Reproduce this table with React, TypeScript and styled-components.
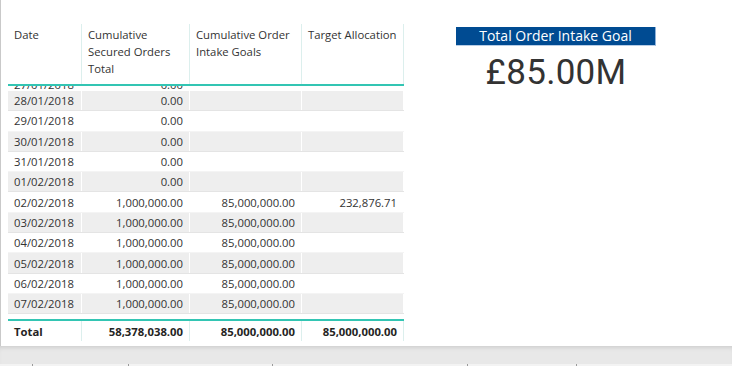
import React from "react";
import styled, { createGlobalStyle } from "styled-components";

const Global = createGlobalStyle`
  html, body { margin: 0; padding: 0; background: #ffffff; }
  body { font-family: "Segoe UI", "Open Sans", sans-serif; }
  * { box-sizing: border-box; }
`;

const TEAL = "#33c5b3";
const DIVIDER = "#dcefed";

const Page = styled.div`
  width: 732px;
  height: 366px;
  display: flex;
  flex-direction: column;
  overflow: hidden;
`;

const Canvas = styled.div`
  height: 346px;
  flex: none;
  display: flex;
  align-items: flex-start;
  background: #ffffff;
  border-left: 1px solid #c9c9c9;
`;

const Matrix = styled.div`
  margin-left: 7px;
  margin-top: 24px;
  width: 396px;
  display: flex;
  flex-direction: column;
  font-size: 11.3px;
  color: #333333;
`;

const GridRow = styled.div`
  display: grid;
  grid-template-columns: 74px 108px 112px 102px;
`;

const HeaderRow = styled(GridRow)`
  height: 62px;
  border-bottom: 2px solid ${TEAL};
`;

const HeaderCell = styled.div`
  padding: 2px 6px 0 6px;
  line-height: 17px;
  border-right: 1px solid ${DIVIDER};
`;

const ScrollBody = styled.div`
  height: 231px;
  overflow: hidden;
  display: flex;
  flex-direction: column;
`;

const BodyRow = styled(GridRow)<{ $shaded: boolean }>`
  height: 20.3px;
  flex: none;
  background: ${(p) => (p.$shaded ? "#eeeeee" : "#ffffff")};
  border-bottom: 1px solid ${(p) => (p.$shaded ? "#e4e4e4" : "#f4f4f4")};
`;

const PeekRow = styled(GridRow)`
  height: 5px;
  flex: none;
  overflow: hidden;
  background: #ffffff;
  grid-template-rows: 5px;
`;

const Cell = styled.div<{ $align?: "left" | "right" }>`
  display: flex;
  align-items: center;
  justify-content: ${(p) => (p.$align === "right" ? "flex-end" : "flex-start")};
  padding: 0 6px;
  white-space: nowrap;
  border-right: 1px solid #ffffff;
`;

const PeekCell = styled(Cell)`
  align-items: flex-end;
  line-height: 8px;
  height: 5px;
  padding-bottom: 2px;
  overflow: hidden;
`;

const TotalRow = styled(GridRow)`
  margin-top: 2px;
  height: 22px;
  border-top: 2px solid ${TEAL};
  font-weight: 700;
  color: #252423;
`;

const TotalCell = styled(Cell)`
  border-right: 1px solid ${DIVIDER};
  padding-top: 1px;
`;

const Card = styled.div`
  margin-left: 52px;
  margin-top: 27px;
  width: 200px;
  display: flex;
  flex-direction: column;
  align-items: center;
`;

const Banner = styled.div`
  width: 200px;
  height: 19px;
  background: #004b92;
  border-right: 1px solid #8eb1d9;
  border-bottom: 1px solid #b8cde6;
  color: #ffffff;
  font-size: 14px;
  line-height: 18px;
  text-align: center;
`;

const Value = styled.div`
  margin-top: 7px;
  font-family: Roboto, "DejaVu Sans", sans-serif;
  font-size: 35px;
  line-height: 40px;
  color: #333333;
  letter-spacing: 0.3px;
`;

const GrayBand = styled.div`
  height: 18px;
  flex: none;
  background: #e8e8e8;
  box-shadow: inset 0 4px 5px -3px rgba(0, 0, 0, 0.14);
`;

const TabStrip = styled.div`
  height: 2px;
  flex: none;
  display: flex;
  background: #f3f3f3;
`;

const TabTick = styled.div<{ $w: number }>`
  width: ${(p) => p.$w}px;
  flex: none;
  border-right: 1px solid #9a9a9a;
`;

type Row = { date: string; sec: string; goal: string; alloc: string };

const rows: Row[] = [
  { date: "28/01/2018", sec: "0.00", goal: "", alloc: "" },
  { date: "29/01/2018", sec: "0.00", goal: "", alloc: "" },
  { date: "30/01/2018", sec: "0.00", goal: "", alloc: "" },
  { date: "31/01/2018", sec: "0.00", goal: "", alloc: "" },
  { date: "01/02/2018", sec: "0.00", goal: "", alloc: "" },
  { date: "02/02/2018", sec: "1,000,000.00", goal: "85,000,000.00", alloc: "232,876.71" },
  { date: "03/02/2018", sec: "1,000,000.00", goal: "85,000,000.00", alloc: "" },
  { date: "04/02/2018", sec: "1,000,000.00", goal: "85,000,000.00", alloc: "" },
  { date: "05/02/2018", sec: "1,000,000.00", goal: "85,000,000.00", alloc: "" },
  { date: "06/02/2018", sec: "1,000,000.00", goal: "85,000,000.00", alloc: "" },
  { date: "07/02/2018", sec: "1,000,000.00", goal: "85,000,000.00", alloc: "" },
];

export default function App() {
  return (
    <>
      <Global />
      <Page>
        <Canvas>
          <Matrix>
            <HeaderRow>
              <HeaderCell>Date</HeaderCell>
              <HeaderCell>Cumulative Secured Orders Total</HeaderCell>
              <HeaderCell>Cumulative Order Intake Goals</HeaderCell>
              <HeaderCell>Target Allocation</HeaderCell>
            </HeaderRow>
            <ScrollBody>
              <PeekRow>
                <PeekCell>27/01/2018</PeekCell>
                <PeekCell $align="right">0.00</PeekCell>
                <PeekCell />
                <PeekCell />
              </PeekRow>
              {rows.map((r, i) => (
                <BodyRow key={r.date} $shaded={i % 2 === 0}>
                  <Cell>{r.date}</Cell>
                  <Cell $align="right">{r.sec}</Cell>
                  <Cell $align="right">{r.goal}</Cell>
                  <Cell $align="right">{r.alloc}</Cell>
                </BodyRow>
              ))}
            </ScrollBody>
            <TotalRow>
              <TotalCell>Total</TotalCell>
              <TotalCell $align="right">58,378,038.00</TotalCell>
              <TotalCell $align="right">85,000,000.00</TotalCell>
              <TotalCell $align="right">85,000,000.00</TotalCell>
            </TotalRow>
          </Matrix>
          <Card>
            <Banner>Total Order Intake Goal</Banner>
            <Value>£85.00M</Value>
          </Card>
        </Canvas>
        <GrayBand />
        <TabStrip>
          <TabTick $w={33} />
          <TabTick $w={96} />
          <TabTick $w={144} />
          <TabTick $w={195} />
          <TabTick $w={109} />
        </TabStrip>
      </Page>
    </>
  );
}
